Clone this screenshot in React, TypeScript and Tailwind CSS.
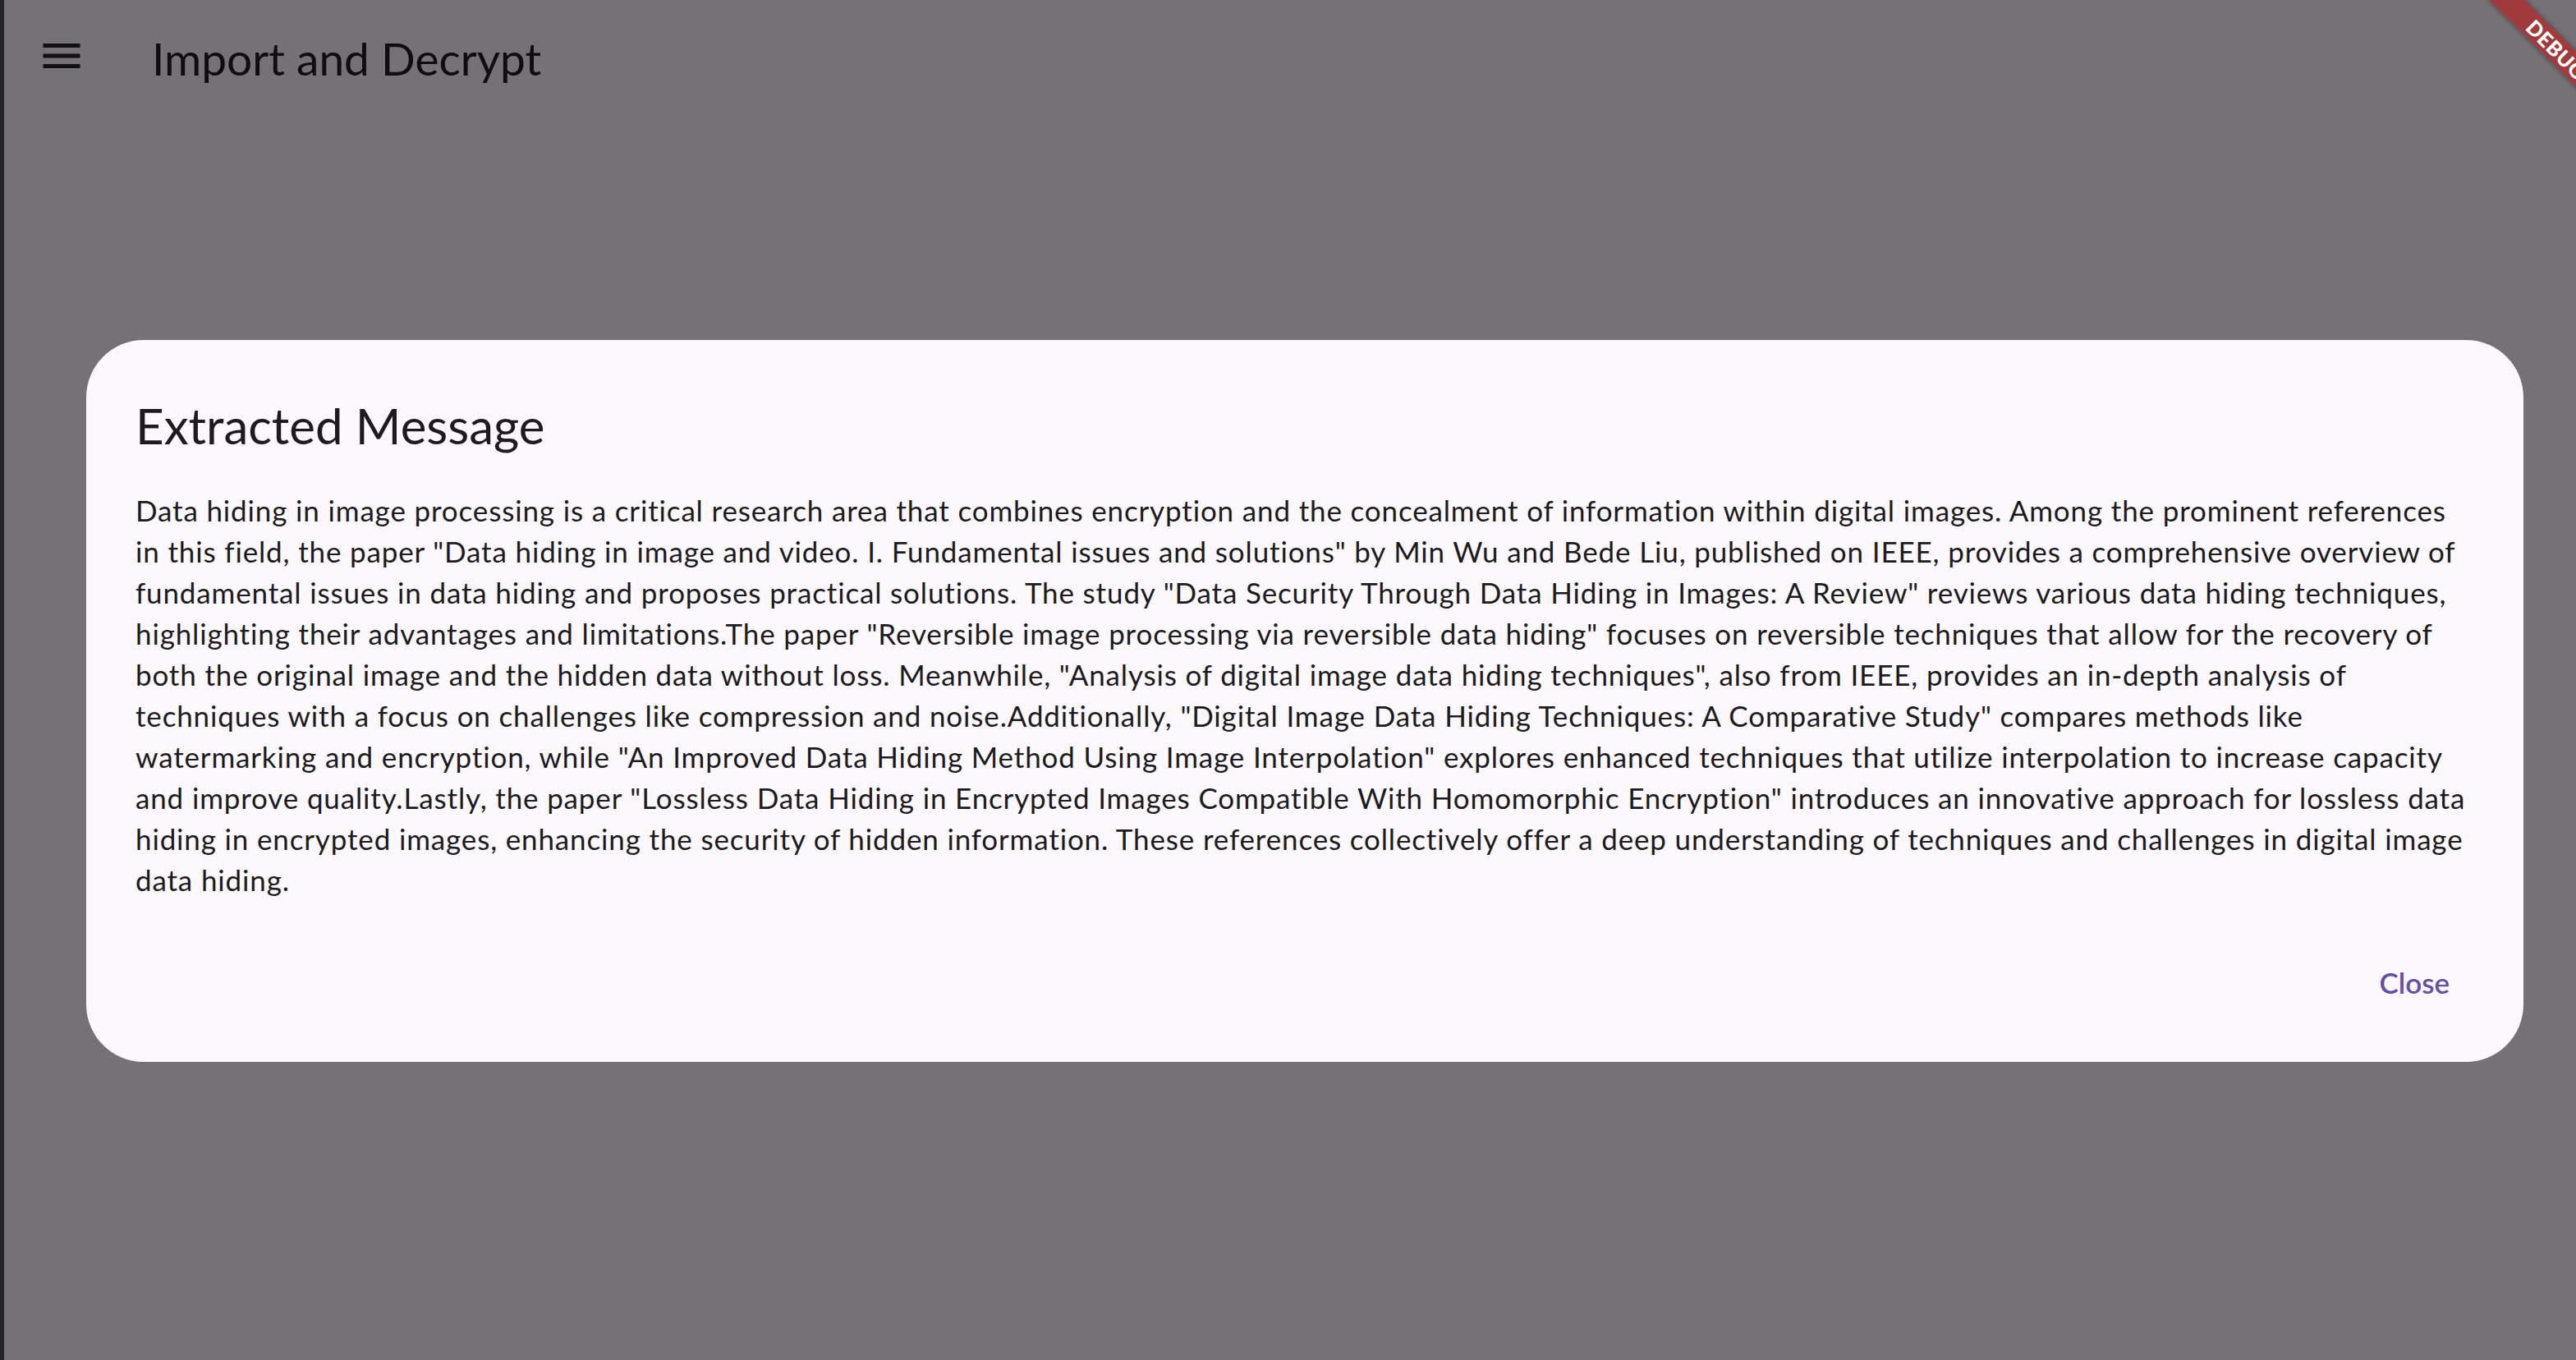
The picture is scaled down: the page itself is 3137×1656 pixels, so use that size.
import React from 'react';

const lines = [
  'Data hiding in image processing is a critical research area that combines encryption and the concealment of information within digital images. Among the prominent references',
  'in this field, the paper "Data hiding in image and video. I. Fundamental issues and solutions" by Min Wu and Bede Liu, published on IEEE, provides a comprehensive overview of',
  'fundamental issues in data hiding and proposes practical solutions. The study "Data Security Through Data Hiding in Images: A Review" reviews various data hiding techniques,',
  'highlighting their advantages and limitations.The paper "Reversible image processing via reversible data hiding" focuses on reversible techniques that allow for the recovery of',
  'both the original image and the hidden data without loss. Meanwhile, "Analysis of digital image data hiding techniques", also from IEEE, provides an in-depth analysis of',
  'techniques with a focus on challenges like compression and noise.Additionally, "Digital Image Data Hiding Techniques: A Comparative Study" compares methods like',
  'watermarking and encryption, while "An Improved Data Hiding Method Using Image Interpolation" explores enhanced techniques that utilize interpolation to increase capacity',
  'and improve quality.Lastly, the paper "Lossless Data Hiding in Encrypted Images Compatible With Homomorphic Encryption" introduces an innovative approach for lossless data',
  'hiding in encrypted images, enhancing the security of hidden information. These references collectively offer a deep understanding of techniques and challenges in digital image',
  'data hiding.',
];

const MenuIcon = () => (
  <svg width="60" height="60" viewBox="0 0 24 24" fill="#111013">
    <rect x="3" y="6" width="18" height="2" />
    <rect x="3" y="11" width="18" height="2" />
    <rect x="3" y="16" width="18" height="2" />
  </svg>
);

export default function App() {
  return (
    <div className="relative w-[3137px] h-[1656px] overflow-hidden bg-[#767176] font-['Lato',sans-serif]">
      <div className="flex">
        {/* window chrome strip */}
        <div className="w-[5px] h-[1656px] shrink-0 bg-[#242528]" />

        {/* app surface (extends past the captured area) */}
        <div className="relative w-[3168px] h-[1707px] shrink-0">
          {/* App bar */}
          <header className="flex items-center h-[136px]">
            <div className="w-[140px] flex justify-center">
              <MenuIcon />
            </div>
            <h1 className="ml-[40px] pt-[7px] text-[55px] leading-none text-[#0e0d0f]">Import and Decrypt</h1>
          </header>

          {/* Dialog */}
          <div className="absolute inset-0 flex items-center justify-center px-[100px]">
            <div className="w-full rounded-[70px] bg-[#fdf7fe] pt-[64px] px-[60px] pb-[47px]">
              <h2 className="text-[60px] leading-[80px] text-[#1d1b20]">Extracted Message</h2>
              <div className="mt-[38px] text-[35px] leading-[50px] tracking-[0.85px] text-[#1d1b20]">
                {lines.map((l, i) => (
                  <div key={i} className="whitespace-nowrap">{l}</div>
                ))}
              </div>
              <div className="mt-[50px] flex justify-end">
                <button className="h-[100px] px-[30px] text-[35px] font-semibold text-[#6750a4]">Close</button>
              </div>
            </div>
          </div>

          {/* Debug banner */}
          <div className="absolute top-[45px] right-[-40px] w-[200px] h-[30px] rotate-45 bg-[rgba(183,28,28,0.63)] shadow-[0_0_6px_rgba(0,0,0,0.5)] flex items-center justify-center">
            <span className="text-[25px] leading-none font-black tracking-wide text-white">DEBUG</span>
          </div>
        </div>
      </div>
    </div>
  );
}
